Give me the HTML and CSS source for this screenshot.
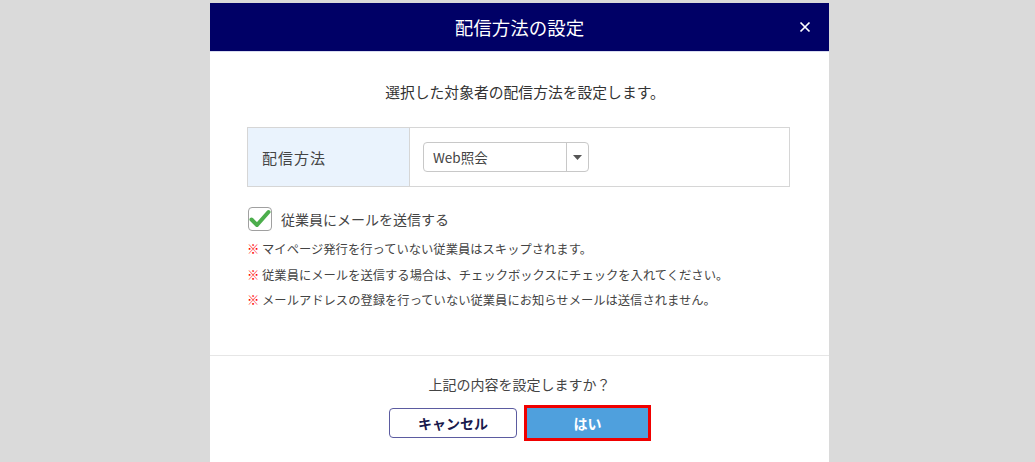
FILE: index.html
```html
<!DOCTYPE html>
<html lang="ja">
<head>
<meta charset="utf-8">
<title>配信方法の設定</title>
<link rel="stylesheet" href="styles.css">
</head>
<body>
<div class="modal">
  <div class="modal-header">
    <h1 class="modal-title">配信方法の設定</h1>
    <span class="close"><svg width="12" height="12" viewBox="0 0 12 12"><path d="M1.5 1.5L10.5 10.5M10.5 1.5L1.5 10.5" stroke="#fff" stroke-width="1.7" fill="none"/></svg></span>
  </div>
  <div class="modal-body">
    <p class="lead">選択した対象者の配信方法を設定します。</p>
    <div class="form-table">
      <div class="form-label">配信方法</div>
      <div class="form-field">
        <div class="select">
          <span class="select-value">Web照会</span>
          <span class="select-arrow"><svg width="9" height="5" viewBox="0 0 9 5"><path d="M0 0H9L4.5 5Z" fill="#555"/></svg></span>
        </div>
      </div>
    </div>
    <label class="check-row">
      <span class="checkbox"><svg width="22" height="20" viewBox="0 0 22 20"><path d="M2.5 10.5 L8 16 L19.5 3" fill="none" stroke="#4cae4c" stroke-width="4" stroke-linecap="round" stroke-linejoin="round"/></svg></span>
      <span class="check-text">従業員にメールを送信する</span>
    </label>
    <ul class="notes">
      <li><span class="mark">※</span> マイページ発行を行っていない従業員はスキップされます。</li>
      <li><span class="mark">※</span> 従業員にメールを送信する場合は、チェックボックスにチェックを入れてください。</li>
      <li><span class="mark">※</span> メールアドレスの登録を行っていない従業員にお知らせメールは送信されません。</li>
    </ul>
  </div>
  <div class="modal-footer">
    <p class="confirm">上記の内容を設定しますか？</p>
    <div class="buttons">
      <button class="btn btn-cancel">キャンセル</button>
      <span class="highlight"><button class="btn btn-ok">はい</button></span>
    </div>
  </div>
</div>
</body>
</html>
```
FILE: styles.css
```css
html, body {
  margin: 0;
  padding: 0;
  background: #dadada;
  height: 100%;
  overflow: hidden;
}
body {
  font-family: "Noto Sans CJK JP", "Noto Sans", sans-serif;
  color: #333;
}
.modal {
  margin: 3px 0 0 210px;
  width: 619px;
  background: #fff;
  min-height: 470px;
}
.modal-header {
  height: 48px;
  background: #000066;
  display: flex;
  align-items: center;
  justify-content: center;
  position: relative;
  border-bottom: 1px solid #d8dcef;
}
.modal-title {
  margin: 0;
  font-size: 18.5px;
  font-weight: normal;
  color: #fff;
  line-height: 24px;
}
.close {
  position: absolute;
  right: 18px;
  top: 18px;
  width: 12px;
  height: 12px;
  display: flex;
}
.modal-body {
  padding: 28px 39px 41px 37px;
  border-bottom: 1px solid #e6e6e6;
}
.lead {
  margin: 0 0 23px;
  padding-left: 13px;
  text-align: center;
  font-size: 14.8px;
  line-height: 24px;
  color: #333;
}
.form-table {
  display: flex;
  border: 1px solid #d6d6d6;
  height: 58px;
}
.form-label {
  width: 147px;
  background: #eaf3fd;
  border-right: 1px solid #d6d6d6;
  display: flex;
  align-items: center;
  padding-left: 14px;
  font-size: 15px;
  letter-spacing: 1px;
  color: #444;
}
.form-field {
  flex: 1;
  display: flex;
  align-items: center;
  padding-left: 13px;
}
.select {
  width: 166px;
  border: 1px solid #c8c8c8;
  border-radius: 4px;
  display: flex;
  align-items: center;
  box-sizing: border-box;
  height: 30px;
}
.select-value {
  flex: 1;
  padding-left: 9px;
  font-size: 13.5px;
  color: #444;
}
.select-arrow {
  width: 21px;
  height: 100%;
  border-left: 1px solid #c8c8c8;
  display: flex;
  align-items: center;
  justify-content: center;
}
.check-row {
  display: flex;
  align-items: center;
  margin-top: 20px;
  margin-left: 1px;
  height: 24px;
}
.checkbox {
  width: 22px;
  height: 22px;
  border: 1px solid #a0a0a0;
  border-radius: 4px;
  display: flex;
  align-items: center;
  justify-content: center;
  background: #fff;
}
.check-text {
  margin-left: 9px;
  font-size: 14px;
  color: #444;
}
.notes {
  list-style: none;
  margin: 6px 0 0;
  padding: 0;
}
.notes li {
  font-size: 12.3px;
  line-height: 25.5px;
  color: #444;
}
.mark {
  color: #ff0000;
  font-weight: bold;
}
.modal-footer {
  padding-top: 17px;
  text-align: center;
}
.confirm {
  margin: 0;
  font-size: 14px;
  line-height: 22px;
  color: #444;
}
.buttons {
  margin-top: 10px;
  display: flex;
  justify-content: center;
  align-items: center;
  gap: 7px;
  padding-left: 1px;
}
.btn {
  font-family: "Noto Sans CJK JP", sans-serif;
  font-size: 14px;
  font-weight: bold;
  height: 30px;
  width: 128px;
  border-radius: 4px;
  cursor: pointer;
  padding: 0;
}
.btn-cancel {
  background: #fff;
  border: 1px solid #5b5ba0;
  color: #1a1a4d;
}
.highlight {
  display: inline-flex;
  border: 3px solid #f00000;
}
.btn-ok {
  background: #4fa0dd;
  border: 1px solid #4fa0dd;
  color: #fff;
  border-radius: 0;
  width: 121px;
  height: 30px;
}
```
